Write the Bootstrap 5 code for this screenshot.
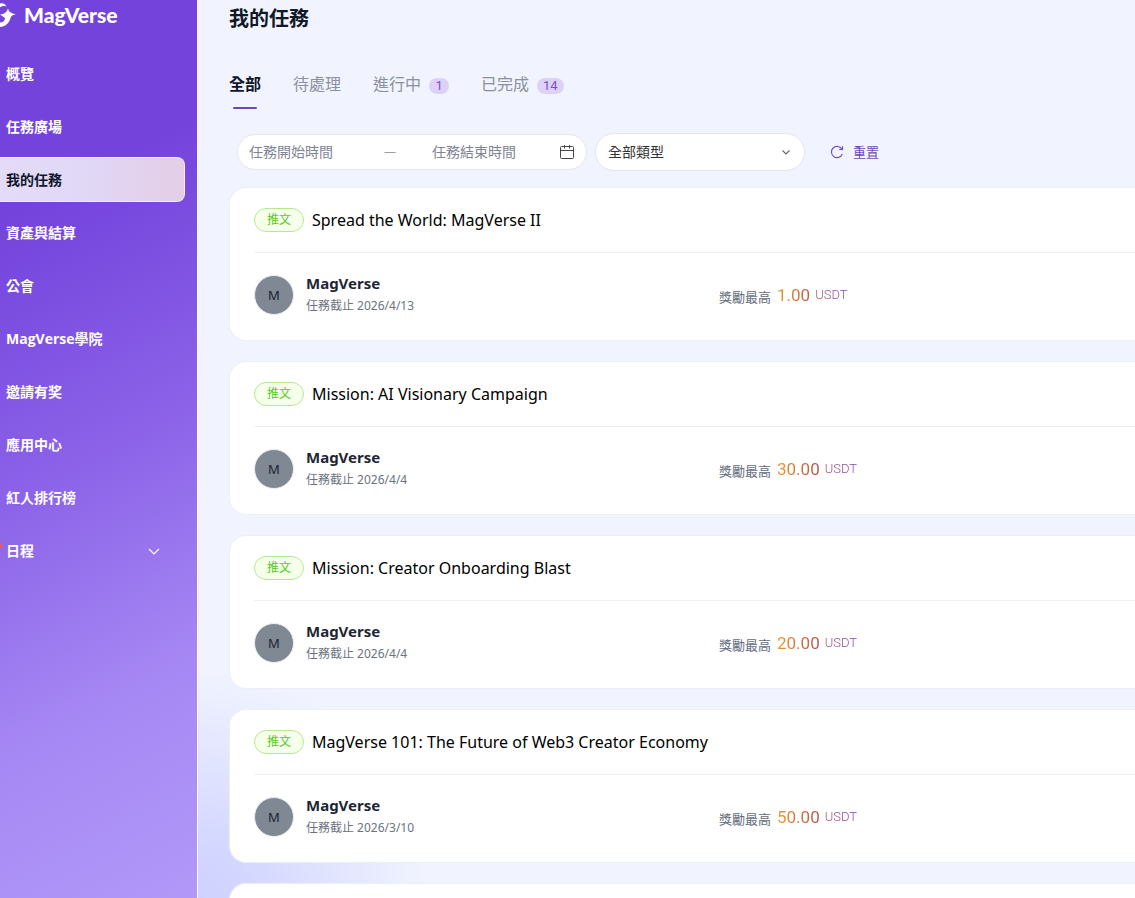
<!DOCTYPE html>
<html lang="zh-Hant">
<head>
<meta charset="utf-8">
<meta name="viewport" content="width=device-width, initial-scale=1">
<title>MagVerse - 我的任務</title>
<link href="https://cdn.jsdelivr.net/npm/bootstrap@5.3.0/dist/css/bootstrap.min.css" rel="stylesheet">
<style>
  body { font-family: "Noto Sans", "Noto Sans CJK TC", sans-serif; font-size: 14px; line-height: 20px; color: #111827; background: #f1f4fe; }
  .app-shell { height: 100vh; }
  .side-panel { width: 198px; border-right: 1px solid #fff; background: linear-gradient(152deg, #7443dc 0%, #7443dc 22%, #8b62e8 50%, #a688f4 76%, #b198f8 100%); }
  .brand-row { height: 30px; color: #fff; font: 900 21px/30px "Lato", sans-serif; }
  .brand-row svg { width: 16px; height: 30px; }
  .side-nav { margin-top: 21px; gap: 8px; padding-right: 12px; }
  .side-nav a { height: 45px; padding-left: 6px; font-family: "Open Sans", "Noto Sans CJK TC", sans-serif; font-weight: 700; color: #fff; border: 1px solid transparent; border-left: 0; border-radius: 0 8px 8px 0; text-decoration: none; }
  .side-nav a.active { color: #10162b; border-color: #f4edfb; background: linear-gradient(90deg, #e3dbf7 0%, #e0d8f6 45%, #e5cde6 100%) border-box; }
  .red-dot { left: -4px; top: 14px; width: 6px; height: 6px; background: #f4574d; }
  .main-area { padding-left: 32px; background: radial-gradient(circle at 0 100%, #cfd1ff 0, #d3d6ff 50px, rgba(241,244,254,0) 230px), #f1f4fe; }
  .page-top { margin-left: -1px; }
  h1 { font-size: 20px; line-height: 28px; font-weight: 700; margin: 5px 0 0; }
  .tab-row { margin-top: 37px; gap: 32px; }
  .tab-row button { height: 39px; font-size: 16px; line-height: 28px; color: #8b90a0; border: 0; background: none; padding: 0; display: flex; align-items: flex-start; position: relative; }
  .tab-row button.active { color: #10162b; font-weight: 700; }
  .tab-row button.active::after { content: ""; position: absolute; left: 4px; right: 4px; bottom: 0; height: 2px; border-radius: 1px; background: #7047b8; }
  .count-pill { margin: 8px 0 0 8px; min-width: 20px; padding: 0 6px; height: 16px; border-radius: 8px; background: #ded1f8; color: #7c4fc9; font: 13px/16px "Roboto", sans-serif; }
  .filters { margin: 24px 0 17px 8px; gap: 8px; }
  .pill-box { height: 38px; border: 1px solid #e3e5ef; border-radius: 19px; background: #fff; }
  .range-box { width: 350px; height: 36px; padding: 0 12px 0 11px; }
  .range-box input { width: 122px; border: 0; padding: 0; outline: 0; background: none; }
  .range-box input::placeholder { color: #808492; opacity: 1; }
  .range-box .dash { width: 61px; padding-left: 13px; color: #9a9da8; font-size: 12px; }
  .type-box { width: 210px; position: relative; }
  .type-box select { width: 100%; height: 36px; appearance: none; border: 0; background: none; padding: 0 12px; color: #333; border-radius: 19px; }
  .type-box svg { right: 12px; top: 12px; pointer-events: none; }
  .reset-btn { border: 0; background: none; padding: 0; margin-left: 17px; color: #7346be; font-size: 13px; gap: 9px; }
  .task-list { gap: 22px; }
  .task { height: 152px; flex: none; background: #fff; border-radius: 16px 0 0 16px; padding-left: 24px; box-shadow: 0 0 1px 1px #eceff8; }
  .task-head { height: 65px; border-bottom: 1px solid #eef0f3; gap: 8px; }
  .tag { width: 50px; height: 24px; border: 1px solid #b5ea93; border-radius: 12px; background: #f5ffe9; color: #58c928; font-size: 12px; line-height: 21px; }
  .task h2 { margin: 0; font-size: 16px; line-height: 24px; font-weight: 400; color: #000; }
  .task-body { height: 84px; display: grid; grid-template-columns: 465px 1fr; }
  .face { width: 40px; height: 40px; border: 1px solid #eceef2; background: #808894; color: #1b2330; font-size: 13px; }
  .owner { font-size: 15px; line-height: 24px; font-weight: 700; color: #1e2635; }
  .due { font-size: 12px; line-height: 22px; color: #6c7280; padding-bottom: 2px; }
  .label-max { font-size: 13px; line-height: 18px; color: #626b7b; }
  .prize { margin-left: 6px; gap: 5px; font-family: "Roboto", sans-serif; background: linear-gradient(90deg, #f0982a 0%, #b6584f 50%, #7d3fc4 100%); -webkit-background-clip: text; background-clip: text; color: transparent; }
  .prize b { font-size: 17px; font-weight: 400; line-height: 22px; }
  .prize span { font-size: 13px; font-weight: 300; }
</style>
</head>
<body>
<div class="app-shell d-flex overflow-hidden">
  <aside class="side-panel flex-shrink-0">
    <div class="brand-row d-flex align-items-center">
      <svg viewBox="0 0 16 30" fill="#fff" aria-hidden="true"><path d="M0 3.500c3-.8 5 .3 6.500 3-2.500-.8-4.500-.5-6.500.8z"/><path d="M8 8.500q.8 4.500 8 5.700-4.800.8-5.300 3.300C9.500 23 5 27 0 27v-4.500c3.200 0 5-1.800 5-4.500L0 14.500q6.500-.6 8-6z"/></svg>
      <span class="ps-2">MagVerse</span>
    </div>
    <nav class="side-nav d-flex flex-column">
      <a class="d-flex align-items-center" href="#">概覽</a>
      <a class="d-flex align-items-center" href="#">任務廣場</a>
      <a class="d-flex align-items-center active" href="#" aria-current="page">我的任務</a>
      <a class="d-flex align-items-center" href="#">資產與結算</a>
      <a class="d-flex align-items-center" href="#">公會</a>
      <a class="d-flex align-items-center" href="#">MagVerse學院</a>
      <a class="d-flex align-items-center" href="#">邀請有奖</a>
      <a class="d-flex align-items-center" href="#">應用中心</a>
      <a class="d-flex align-items-center" href="#">紅人排行榜</a>
      <a class="d-flex align-items-center justify-content-between position-relative pe-4" href="#"><i class="red-dot position-absolute rounded-circle"></i>日程
        <svg width="12" height="12" viewBox="0 0 12 12" fill="none" stroke="#fff" stroke-width="1.200"><path d="M1 4l5 5 5-5"/></svg></a>
    </nav>
  </aside>
  <main class="main-area flex-grow-1 overflow-hidden">
    <div class="page-top">
      <h1>我的任務</h1>
      <div class="tab-row d-flex" role="tablist">
        <button class="active" role="tab" aria-selected="true">全部</button>
        <button role="tab">待處理</button>
        <button role="tab">進行中<span class="count-pill">1</span></button>
        <button role="tab">已完成<span class="count-pill">14</span></button>
      </div>
      <form class="filters d-flex align-items-center">
        <div class="pill-box range-box d-flex align-items-center">
          <input type="text" placeholder="任務開始時間" aria-label="任務開始時間">
          <span class="dash">—</span>
          <input type="text" placeholder="任務結束時間" aria-label="任務結束時間">
          <svg class="ms-auto" width="14" height="14" viewBox="0 0 14 14" fill="none" stroke="#444" stroke-width="1"><path d="M1.500 1.500h11a1 1 0 0 1 1 1v10a1 1 0 0 1-1 1h-11a1 1 0 0 1-1-1v-10a1 1 0 0 1 1-1zM.5 5.500h13M4.500 0v3.500M9.500 0v3.500"/></svg>
        </div>
        <div class="pill-box type-box">
          <select aria-label="全部類型"><option>全部類型</option></select>
          <svg class="position-absolute" width="12" height="12" viewBox="0 0 12 12" fill="none" stroke="#666" stroke-width="1.100"><path d="M2.500 4.500L6 8l3.500-3.500"/></svg>
        </div>
        <button type="button" class="reset-btn d-flex align-items-center">
          <svg width="14" height="14" viewBox="0 0 14 14" fill="none" stroke="currentColor" stroke-width="1.100"><path d="M12.300 9A5.600 5.600 0 1 1 11.800 4M12.500 1.200v3.300H9.200"/></svg>重置</button>
      </form>
    </div>
    <section class="task-list d-flex flex-column">
      <article class="task">
        <div class="task-head d-flex align-items-center"><span class="tag text-center">推文</span><h2>Spread the World: MagVerse II</h2></div>
        <div class="task-body">
          <div class="d-flex align-items-center gap-2"><span class="face rounded-circle d-flex align-items-center justify-content-center me-1">M</span><div><div class="owner">MagVerse</div><div class="due">任務截止 2026/4/13</div></div></div>
          <div class="d-flex align-items-center"><span class="label-max pt-1">獎勵最高</span><span class="prize d-flex align-items-center"><b>1.00</b><span>USDT</span></span></div>
        </div>
      </article>
      <article class="task">
        <div class="task-head d-flex align-items-center"><span class="tag text-center">推文</span><h2>Mission: AI Visionary Campaign</h2></div>
        <div class="task-body">
          <div class="d-flex align-items-center gap-2"><span class="face rounded-circle d-flex align-items-center justify-content-center me-1">M</span><div><div class="owner">MagVerse</div><div class="due">任務截止 2026/4/4</div></div></div>
          <div class="d-flex align-items-center"><span class="label-max pt-1">獎勵最高</span><span class="prize d-flex align-items-center"><b>30.00</b><span>USDT</span></span></div>
        </div>
      </article>
      <article class="task">
        <div class="task-head d-flex align-items-center"><span class="tag text-center">推文</span><h2>Mission: Creator Onboarding Blast</h2></div>
        <div class="task-body">
          <div class="d-flex align-items-center gap-2"><span class="face rounded-circle d-flex align-items-center justify-content-center me-1">M</span><div><div class="owner">MagVerse</div><div class="due">任務截止 2026/4/4</div></div></div>
          <div class="d-flex align-items-center"><span class="label-max pt-1">獎勵最高</span><span class="prize d-flex align-items-center"><b>20.00</b><span>USDT</span></span></div>
        </div>
      </article>
      <article class="task">
        <div class="task-head d-flex align-items-center"><span class="tag text-center">推文</span><h2>MagVerse 101: The Future of Web3 Creator Economy</h2></div>
        <div class="task-body">
          <div class="d-flex align-items-center gap-2"><span class="face rounded-circle d-flex align-items-center justify-content-center me-1">M</span><div><div class="owner">MagVerse</div><div class="due">任務截止 2026/3/10</div></div></div>
          <div class="d-flex align-items-center"><span class="label-max pt-1">獎勵最高</span><span class="prize d-flex align-items-center"><b>50.00</b><span>USDT</span></span></div>
        </div>
      </article>
      <article class="task"></article>
    </section>
  </main>
</div>
<script src="https://cdn.jsdelivr.net/npm/bootstrap@5.3.0/dist/js/bootstrap.bundle.min.js"></script>
</body>
</html>
